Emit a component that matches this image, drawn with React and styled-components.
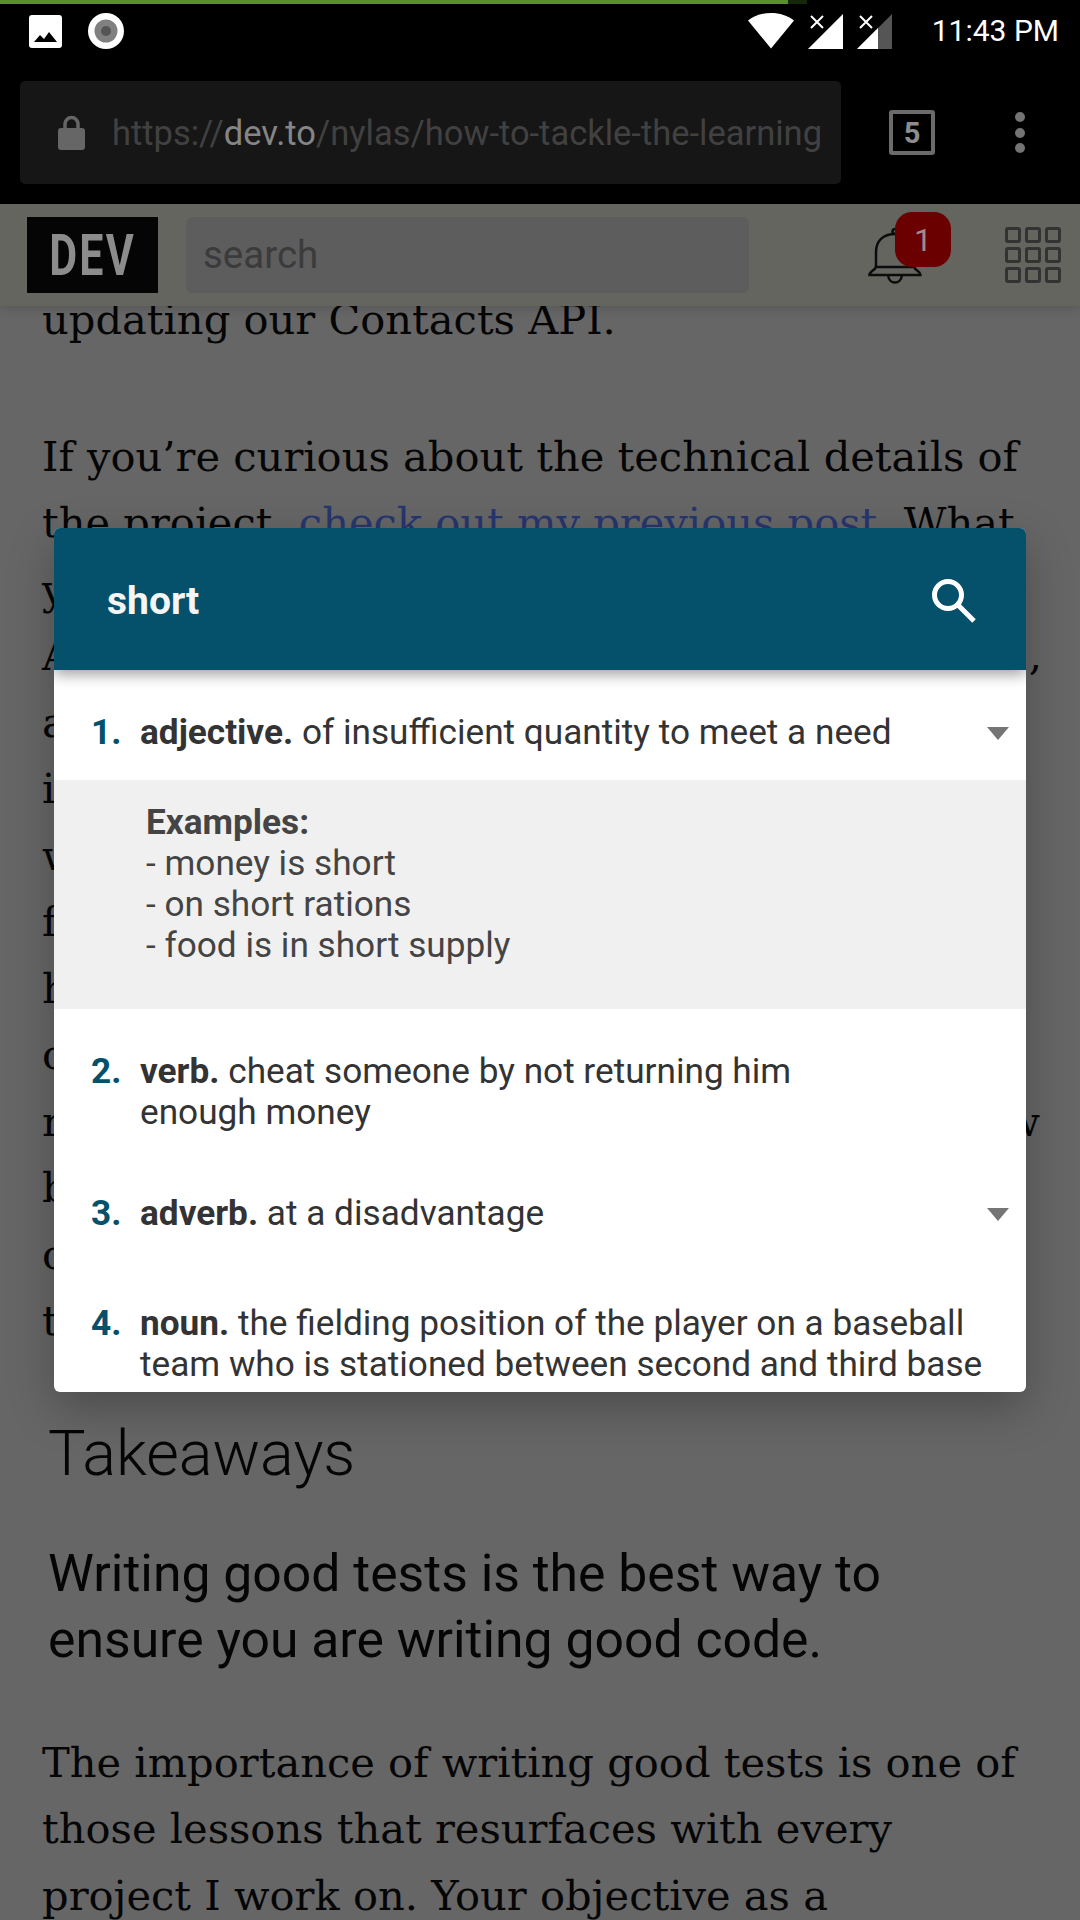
import React from "react"
import styled, { createGlobalStyle } from "styled-components"

const GlobalStyle = createGlobalStyle`
	html, body {
		margin: 0;
		padding: 0;
		background: #666;
	}
	* {
		box-sizing: border-box;
	}
`

const Screen = styled.div`
	position: relative;
	width: 1080px;
	height: 1920px;
	overflow: hidden;
	background: #666;
	font-family: Roboto, "Liberation Sans", sans-serif;
`

const Toolbar = styled.div`
	height: 204px;
	background: #000;
	display: flex;
	flex-direction: column;
`

const Progress = styled.div`
	height: 4px;
	width: 807px;
	background: #16280a;
`

const ProgressFill = styled.div`
	height: 4px;
	background: #5a9029;
`

const StatusBar = styled.div`
	height: 77px;
	padding: 9px 21px 0 29px;
	display: flex;
	align-items: flex-start;
`

const StatusLeft = styled.div`
	display: flex;
	align-items: center;
	gap: 26px;
	flex: 1;
`

const StatusRight = styled.div`
	display: flex;
	align-items: center;
	gap: 14px;
`

const Time = styled.span`
	margin-left: 26px;
	color: #fff;
	font-size: 30px;
	line-height: 36px;
`

const UrlRow = styled.div`
	display: flex;
	align-items: center;
	padding-left: 20px;
	height: 103px;
`

const UrlBox = styled.div`
	width: 821px;
	height: 103px;
	background: #161616;
	border-radius: 5px;
	display: flex;
	align-items: center;
	padding: 0 20px 0 38px;
	gap: 27px;
`

const UrlText = styled.div`
	flex: 1;
	overflow: hidden;
	white-space: nowrap;
	font-size: 34.5px;
	color: #414141;
`

const Domain = styled.span`
	color: #858585;
`

const TabCount = styled.div`
	width: 46px;
	height: 45px;
	margin-left: 48px;
	border: 4px solid #6b6b6b;
	border-radius: 3px;
	display: flex;
	align-items: center;
	justify-content: center;
	color: #8d8d8d;
	font-size: 29px;
	font-weight: 700;
`

const Dots = styled.div`
	margin-left: 80px;
	display: flex;
	flex-direction: column;
	gap: 5.5px;
`

const Dot = styled.div`
	width: 10px;
	height: 10px;
	border-radius: 50%;
	background: #737373;
`

const SiteHeader = styled.div`
	position: relative;
	z-index: 1;
	height: 102px;
	background: #65655f;
	box-shadow: 0 2px 10px rgba(0, 0, 0, 0.16);
	display: flex;
	align-items: center;
	padding: 0 19px 0 27px;
`

const Logo = styled.div`
	width: 131px;
	height: 76px;
	background: #050505;
	display: flex;
	align-items: center;
	justify-content: center;
	color: #8c8c8c;
	font-size: 58px;
	font-weight: 700;
	overflow: hidden;
`

const LogoText = styled.span`
	display: block;
	transform: scaleX(0.74);
	letter-spacing: 3px;
`

const Search = styled.div`
	width: 563px;
	height: 76px;
	margin-left: 28px;
	background: #5d5d5d;
	border-radius: 6px;
	padding: 0 0 2px 17px;
	display: flex;
	align-items: center;
	color: #3b3b3b;
	font-size: 38.5px;
`

const Bell = styled.div`
	position: relative;
	width: 54px;
	height: 56px;
	margin-left: auto;
	margin-right: 83px;
	align-self: flex-start;
	margin-top: 24px;
`

const Badge = styled.div`
	position: absolute;
	left: 27px;
	top: -16px;
	width: 56px;
	height: 55px;
	border-radius: 17px;
	background: #6b0000;
	color: #a08c8c;
	font-size: 32px;
	display: flex;
	align-items: center;
	justify-content: center;
`

const AppGrid = styled.div`
	display: grid;
	grid-template-columns: repeat(3, 16px);
	grid-auto-rows: 16px;
	gap: 4px;
`

const AppCell = styled.div`
	border: 3px solid #333;
	border-radius: 3px;
`

const Article = styled.div`
	margin-top: -19px;
	color: #050505;
`

const Paragraph = styled.div`
	padding: 0 0 0 42px;
	margin-bottom: ${(p) => p.$gap || 70}px;
	font-family: "DejaVu Serif", serif;
	font-size: 41.6px;
	line-height: 66.5px;
	white-space: nowrap;
`

const Line = styled.div`
	display: flex;
	justify-content: space-between;
	width: ${(p) => p.$width || 1000}px;
`

const Link = styled.span`
	color: #27366e;
`

const Heading = styled.div`
	padding-left: 48px;
	font-size: 63px;
	font-weight: 300;
	line-height: 80px;
	margin-bottom: 47px;
`

const Lead = styled.div`
	padding-left: 48px;
	font-size: 51.700px;
	line-height: 66px;
	margin-bottom: 57px;
`

const Dialog = styled.div`
	position: absolute;
	left: 54px;
	top: 528px;
	width: 972px;
	height: 864px;
	background: #fff;
	border-radius: 6px;
	overflow: hidden;
	display: flex;
	flex-direction: column;
`

const DialogShadow = styled.div`
	position: absolute;
	left: 54px;
	top: 528px;
	width: 972px;
	height: 864px;
	border-radius: 6px;
	box-shadow: 0 16px 46px rgba(0, 0, 0, 0.26);
`

const DialogTitle = styled.div`
	flex: none;
	height: 142px;
	position: relative;
	background: #05506b;
	box-shadow: 0 4px 14px rgba(0, 0, 0, 0.4);
	display: flex;
	align-items: center;
	justify-content: space-between;
	padding: 3px 50px 0 53px;
	color: #f5f5f5;
	font-size: 39px;
	font-weight: 700;
`

const Sense = styled.div`
	display: flex;
	align-items: flex-start;
	flex: none;
	padding-top: ${(p) => p.$top || 0}px;
	height: ${(p) => p.$height}px;
	font-size: 35.2px;
	line-height: 41px;
	color: #333;
`

const Num = styled.div`
	flex: none;
	width: 86px;
	padding-left: 37px;
	color: #05506b;
	font-weight: 700;
`

const SenseText = styled.div`
	flex: 1;
	white-space: nowrap;
`

const Pos = styled.b`
	font-weight: 700;
`

const Caret = styled.div`
	flex: none;
	width: 0;
	height: 0;
	margin: 15px 17px 0 0;
	border-left: 11.500px solid transparent;
	border-right: 11.500px solid transparent;
	border-top: 13px solid #757575;
`

const Examples = styled.div`
	flex: none;
	background: #f0f0f0;
	height: 229px;
	padding: 22px 0 0 92px;
	font-size: 35.2px;
	line-height: 41px;
	color: #444;
`

const ExamplesTitle = styled.div`
	font-weight: 700;
`

const ImageIcon = () => (
	<svg width="33" height="33" viewBox="0 0 33 33">
		<rect width="33" height="33" rx="3" fill="#fff" />
		<path d="M5 27l6-7 4 4 5-7 8 10z" fill="#000" />
	</svg>
)

const RecordIcon = () => (
	<svg width="36" height="36" viewBox="0 0 36 36">
		<circle cx="18" cy="18" r="18" fill="#fff" />
		<circle cx="18" cy="18" r="11.500" fill="#808080" />
		<circle cx="18" cy="18" r="5" fill="#555" />
	</svg>
)

const WifiIcon = () => (
	<svg width="46" height="36" viewBox="0 0 46 36">
		<path d="M0 7.500C6.300 2.600 14.200 0 23 0s16.700 2.600 23 7.500L23 35.500z" fill="#fff" />
	</svg>
)

const SignalIcon = ({ weak }) => (
	<svg width="35" height="36" viewBox="0 0 35 36">
		{weak ? (
			<>
				<path d="M35 1v35H0z" fill="#555" />
				<path d="M21 15v21H0z" fill="#fff" />
			</>
		) : (
			<path d="M35 1v35H0z" fill="#fff" />
		)}
		<path d="M3 3l12 12M15 3L3 15" stroke="#000" strokeWidth="5" />
		<path d="M3 3l12 12M15 3L3 15" stroke="#fff" strokeWidth="2" />
	</svg>
)

const LockIcon = () => (
	<svg width="27" height="36" viewBox="0 0 27 36" style={{ flex: "none" }}>
		<path d="M7 14V9a6.500 6.500 0 0 1 13 0v5" fill="none" stroke="#666" strokeWidth="3.500" />
		<rect y="13" width="27" height="22" rx="3" fill="#666" />
	</svg>
)

const BellIcon = () => (
	<svg width="54" height="56" viewBox="0 0 54 56" fill="none" stroke="#0c0c0c" strokeWidth="2.500">
		<path d="M8 39V24C8 13 15 6 27 6s19 7 19 18v15" />
		<path d="M1.500 47c0-4 5-4 6.500-8h38c1.500 4 6.500 4 6.500 8z" />
		<path d="M20 47c1 10 13 10 14 0" />
		<circle cx="27" cy="3.500" r="2.500" />
	</svg>
)

const SearchIcon = () => (
	<svg width="44" height="44" viewBox="0 0 44 44" fill="none" stroke="#fff" strokeWidth="5">
		<circle cx="16" cy="16" r="13.500" />
		<path d="M26 26l16 16" />
	</svg>
)

const leftLines = ["y", "A", "a", "i", "w", "f", "h", "c", "r", "b", "c", "t"]

const App = () => (
	<Screen>
		<GlobalStyle />
		<Toolbar>
			<Progress>
				<ProgressFill style={{ width: 788 }} />
			</Progress>
			<StatusBar>
				<StatusLeft>
					<ImageIcon />
					<RecordIcon />
				</StatusLeft>
				<StatusRight>
					<WifiIcon />
					<SignalIcon />
					<SignalIcon weak />
					<Time>11:43 PM</Time>
				</StatusRight>
			</StatusBar>
			<UrlRow>
				<UrlBox>
					<LockIcon />
					<UrlText>
						https://<Domain>dev.to</Domain>/nylas/how-to-tackle-the-learning
					</UrlText>
				</UrlBox>
				<TabCount>5</TabCount>
				<Dots>
					<Dot />
					<Dot />
					<Dot />
				</Dots>
			</UrlRow>
		</Toolbar>
		<SiteHeader>
			<Logo>
				<LogoText>DEV</LogoText>
			</Logo>
			<Search>search</Search>
			<Bell>
				<BellIcon />
				<Badge>1</Badge>
			</Bell>
			<AppGrid>
				{Array.from({ length: 9 }).map((_, i) => (
					<AppCell key={i} />
				))}
			</AppGrid>
		</SiteHeader>
		<Article>
			<Paragraph>updating our Contacts API.</Paragraph>
			<Paragraph $gap={59}>
				<Line>If you’re curious about the technical details of</Line>
				<Line>
					<span>
						the project, <Link>check out my previous post</Link>. What
					</span>
				</Line>
				{leftLines.map((letter, i) => (
					<Line key={i} $width={i === 8 ? 998 : 1000}>
						<span>{letter}</span>
						{i === 1 && <span>,</span>}
						{i === 8 && <span>w</span>}
					</Line>
				))}
			</Paragraph>
			<Heading>Takeaways</Heading>
			<Lead>
				Writing good tests is the best way to
				<br />
				ensure you are writing good code.
			</Lead>
			<Paragraph>
				<Line>The importance of writing good tests is one of</Line>
				<Line>those lessons that resurfaces with every</Line>
				<Line>project I work on. Your objective as a</Line>
			</Paragraph>
		</Article>
		<DialogShadow />
		<Dialog>
			<DialogTitle>
				short
				<SearchIcon />
			</DialogTitle>
			<Sense $top={42} $height={110}>
				<Num>1.</Num>
				<SenseText>
					<Pos>adjective.</Pos> of insufficient quantity to meet a need
				</SenseText>
				<Caret />
			</Sense>
			<Examples>
				<ExamplesTitle>Examples:</ExamplesTitle>
				- money is short
				<br />
				- on short rations
				<br />
				- food is in short supply
			</Examples>
			<Sense $top={42} $height={184}>
				<Num>2.</Num>
				<SenseText>
					<Pos>verb.</Pos> cheat someone by not returning him
					<br />
					enough money
				</SenseText>
			</Sense>
			<Sense $height={110}>
				<Num>3.</Num>
				<SenseText>
					<Pos>adverb.</Pos> at a disadvantage
				</SenseText>
				<Caret />
			</Sense>
			<Sense $height={89}>
				<Num>4.</Num>
				<SenseText>
					<Pos>noun.</Pos> the fielding position of the player on a baseball
					<br />
					team who is stationed between second and third base
				</SenseText>
			</Sense>
		</Dialog>
	</Screen>
)

export default App
